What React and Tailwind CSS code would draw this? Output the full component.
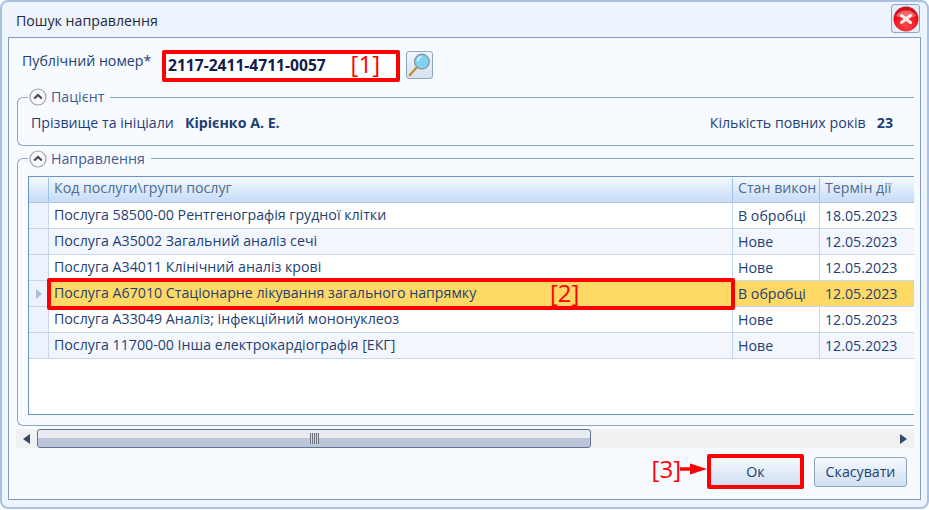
import React from 'react'

const rows = [
  { name: 'Послуга 58500-00 Рентгенографія грудної клітки', state: 'В обробці', date: '18.05.2023' },
  { name: 'Послуга А35002 Загальний аналіз сечі', state: 'Нове', date: '12.05.2023', alt: true },
  { name: 'Послуга А34011 Клінічний аналіз крові', state: 'Нове', date: '12.05.2023' },
  { name: 'Послуга А67010 Стаціонарне лікування загального напрямку', state: 'В обробці', date: '12.05.2023', selected: true },
  { name: 'Послуга А33049 Аналіз; інфекційний мононуклеоз', state: 'Нове', date: '12.05.2023' },
  { name: 'Послуга 11700-00 Інша електрокардіографія [ЕКГ]', state: 'Нове', date: '12.05.2023', alt: true },
]

const markFont = { fontFamily: '"Open Sans", sans-serif' }

function CollapseIcon() {
  return (
    <svg width="18" height="18" viewBox="0 0 18 18">
      <circle cx="9" cy="9" r="8" fill="#f7f9fc" stroke="#a3a3a3" strokeWidth="1.2" />
      <path d="M5.2 10.6 9 6.9l3.8 3.7" fill="none" stroke="#4a4a4a" strokeWidth="2.1" />
    </svg>
  )
}

function SearchIcon() {
  return (
    <svg width="26" height="26" viewBox="0 0 26 26">
      <path d="M3 23.500 11.500 14" stroke="#c98a2b" strokeWidth="2.4" strokeLinecap="round" />
      <circle cx="15.500" cy="9.500" r="7.600" fill="#7fd4f2" stroke="#8a9aa8" strokeWidth="1.500" />
      <path d="M11 9a5 5 0 0 1 4.500-4.500" fill="none" stroke="#e6f8ff" strokeWidth="1.600" />
    </svg>
  )
}

function CloseIcon() {
  return (
    <svg width="26" height="26" viewBox="0 0 26 26">
      <defs>
        <radialGradient id="redball" cx="50%" cy="75%" r="70%">
          <stop offset="0%" stopColor="#ff4a4a" />
          <stop offset="70%" stopColor="#f0101c" />
          <stop offset="100%" stopColor="#c4121e" />
        </radialGradient>
      </defs>
      <circle cx="13" cy="13" r="12.500" fill="url(#redball)" />
      <path d="M3 10a10.500 8 0 0 1 20 0c-6 2.500-14 2.500-20 0z" fill="#ffffff" opacity="0.35" />
      <path d="M8.500 9.500 17.500 16.500M17.500 9.500 8.500 16.500" stroke="#fff" strokeWidth="3" strokeLinecap="round" opacity="0.9" />
    </svg>
  )
}

function Group({ title, children, className, legendClass }) {
  return (
    <div className={`relative ml-2 rounded-l-md border border-r-0 border-[#8ea6c6] ${className}`}>
      <div className={`absolute left-[10px] flex h-[20px] items-center gap-[4px] bg-[#f7faff] pr-[6px] pl-[1px] text-[#3f5f8f] ${legendClass}`}>
        <CollapseIcon />
        <span>{title}</span>
      </div>
      {children}
    </div>
  )
}

export default function App() {
  return (
    <div
      className="h-[510px] w-[929px] overflow-hidden bg-white text-[14.2px] leading-[20px] text-[#1e3f73]"
      style={{ fontFamily: '"Open Sans", "Noto Sans", sans-serif' }}
    >
      <div className="flex h-[509px] flex-col rounded-lg border-2 border-[#a9c1e0] bg-[#edf4fd] px-[6px] pb-[7px]">
        <div className="flex h-[35px] shrink-0 items-center justify-between pl-2 pr-0 text-[#1f2a3a]">
          <span className="translate-y-[1px]">Пошук направлення</span>
          <button className="mt-[-2px] mr-[1px] flex h-[29px] w-[29px] items-center justify-center rounded-[3px] border border-[#8ea6c6] bg-[#e3ecf8]">
            <CloseIcon />
          </button>
        </div>

        <div className="flex min-h-0 flex-1 flex-col border border-[#7f9cc0] bg-[#f7faff] pr-[6px] pt-[12px]">
          <div className="flex h-[32px] items-center pl-[13px]">
            <span className="w-[140px] -translate-y-[5px]">Публічний номер*</span>
            <div className="relative flex h-[32px] w-[238px] items-center rounded-[2px] border-[4px] border-[#ff0000] bg-white pl-[2px] text-[15.600px] font-bold text-[#10204a]">
              <span className="-translate-y-[1px]">2117-2411-4711-0057</span>
              <span className="absolute right-[16px] top-[-4px] text-[24px] leading-[28px] font-normal text-[#ff0000]" style={markFont}>[1]</span>
            </div>
            <button className="ml-[6px] flex h-[28px] w-[27px] -translate-y-[1px] items-center justify-center rounded-[3px] border border-[#8ea6c6] bg-gradient-to-b from-[#f2f6fb] to-[#d5e1f0]">
              <SearchIcon />
            </button>
          </div>

          <Group title="Пацієнт" legendClass="-top-[11px]" className="mt-[15px] h-[49px]">
            <div className="flex h-full items-center justify-between pt-[3px] pl-[13px] pr-[21px]">
              <div className="flex gap-[11px]">
                <span>Прізвище та ініціали</span>
                <span className="font-bold">Кірієнко А. Е.</span>
              </div>
              <div className="flex gap-[11px]">
                <span>Кількість повних років</span>
                <span className="font-bold">23</span>
              </div>
            </div>
          </Group>

          <Group title="Направлення" legendClass="-top-[10px]" className="mt-[12px] h-[268px] pt-[17px] pl-[10px]">
            <div className="relative h-[239px] border-y border-l border-[#6a93c9] bg-white">
              <div className="flex h-[26px] border-b border-[#a9c4e4] bg-gradient-to-b from-[#f5f9ff] to-[#c6dcf6] text-[#4e6b94]">
                <div className="my-[1px] w-[20px] border-r border-[#9dc1ea]" />
                <div className="my-[1px] flex w-[684px] items-center border-r border-[#9dc1ea] pl-[5px]"><span className="-translate-y-[2px]">Код послуги\групи послуг</span></div>
                <div className="my-[1px] flex w-[87px] items-center overflow-hidden whitespace-nowrap border-r border-[#9dc1ea] pl-[5px]"><span className="-translate-y-[2px]">Стан викон</span></div>
                <div className="flex flex-1 items-center pl-[5px]"><span className="-translate-y-[2px]">Термін дії</span></div>
              </div>
              {rows.map((r) => (
                <div
                  key={r.name}
                  className={`flex h-[26px] border-b border-[#c3d6ec] ${r.selected ? 'bg-[#ffd966]' : r.alt ? 'bg-[#f3f7fd]' : 'bg-white'}`}
                >
                  <div className="flex w-[20px] items-center justify-center border-r border-[#c3d6ec] bg-[#edf3fc]">
                    {r.selected && <div className="ml-[1px] h-0 w-0 border-y-[5px] border-l-[6px] border-y-transparent border-l-[#a9bcd8]" />}
                  </div>
                  <div className="flex w-[684px] items-center border-r border-[#c3d6ec] pl-[5px]"><span className="-translate-y-[1px]">{r.name}</span></div>
                  <div className="flex w-[87px] items-center border-r border-[#c3d6ec] pl-[5px]">{r.state}</div>
                  <div className="flex flex-1 items-center pl-[5px]">{r.date}</div>
                </div>
              ))}
              <div className="absolute left-[18px] top-[101px] h-[32px] w-[688px] rounded-[2px] border-[4px] border-[#ff0000]">
                <span className="absolute left-[499px] top-[-3px] text-[24px] leading-[28px] font-normal text-[#ff0000]" style={markFont}>[2]</span>
              </div>
            </div>
          </Group>

          <div className="mt-[3px] ml-[7px] flex h-[19px] items-center bg-[#f0f1f3]">
            <div className="flex w-[21px] justify-center">
              <div className="h-0 w-0 border-y-[5px] border-r-[7px] border-y-transparent border-r-[#36476f]" />
            </div>
            <div className="relative h-[19px] w-[554px] rounded-[3px] border border-[#5f7296] bg-gradient-to-b from-[#e8ebf0] from-45% to-[#bcc6d8] to-50%">
              <div className="absolute left-[272px] top-[3px] h-[11px] w-[9px] bg-[repeating-linear-gradient(90deg,#6b6f78_0,#6b6f78_1px,#d8dbe0_1px,#d8dbe0_2px)]" />
            </div>
            <div className="flex flex-1 justify-end pr-[7px]">
              <div className="h-0 w-0 border-y-[5px] border-l-[7px] border-y-transparent border-l-[#36476f]" />
            </div>
          </div>

          <div className="mt-[6px] flex items-start justify-end pr-[7px]">
            <span className="mt-[1px] text-[24px] leading-[28px] font-normal text-[#ff0000]" style={markFont}>[3]</span>
            <svg width="27" height="14" viewBox="0 0 27 14" className="mt-[8px] -ml-[1px]">
              <path d="M0 7h12" stroke="#ff0000" strokeWidth="3.500" />
              <path d="M10 1.500 27 7 10 12.500z" fill="#ff0000" />
            </svg>
            <button className="h-[35px] w-[97px] rounded-[2px] border-[4px] border-[#ff0000] bg-gradient-to-b from-[#f6f9fd] to-[#cfdff2] text-[#1e3f73]">Ок</button>
            <button className="ml-[10px] mt-[3px] h-[30px] w-[93px] rounded-[3px] border border-[#8ea6c6] bg-gradient-to-b from-[#f6f9fd] to-[#cfdff2] text-[#1e3f73]">Скасувати</button>
          </div>
        </div>
      </div>
    </div>
  )
}
